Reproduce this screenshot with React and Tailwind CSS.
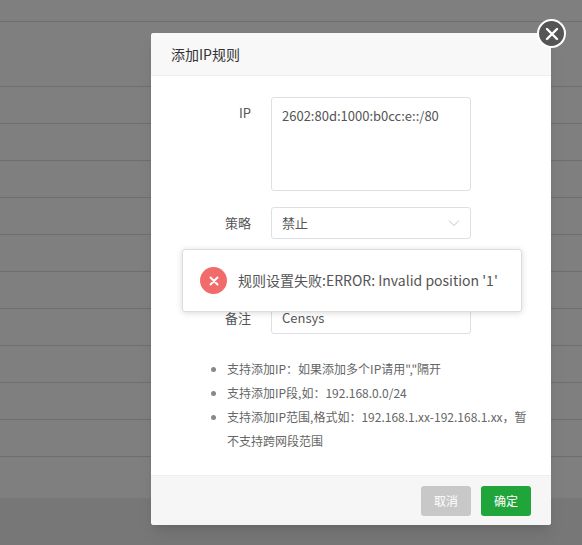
import React from 'react';

const font = { fontFamily: '"Noto Sans CJK SC", "Noto Sans", sans-serif' };

export default function App() {
  const rows = Array.from({ length: 11 });
  return (
    <div className="relative w-[582px] h-[545px] overflow-hidden bg-[#7f7f7f]" style={font}>
      {/* dimmed table behind */}
      <div className="pt-[21px]">
        <div className="h-[65px] border-t border-[#6e6e6e]" />
        {rows.map((_, i) => (
          <div key={i} className="h-[37px] border-t border-[#6e6e6e]" />
        ))}
      </div>
      <div className="absolute left-0 right-0 top-[498px] bottom-0 bg-[#777]" />

      {/* modal */}
      <div className="absolute left-[151px] top-[33px] w-[400px] h-[492px] bg-white rounded-[3px] flex flex-col shadow-lg">
        <div className="h-[43px] bg-[#f8f8f8] border-b border-[#eee] rounded-t-[3px] flex items-center px-[20px] text-[14px] text-[#333]">
          添加IP规则
        </div>
        <div className="flex-1 pt-[21px] text-[13px] text-[#555]">
          <div className="flex">
            <div className="w-[100px] text-right pt-[6px]">IP</div>
            <div className="ml-[20px] w-[200px] h-[94px] border border-[#dcdfe6] rounded-[3px] px-[10px] py-[8px] text-[#555]">
              2602:80d:1000:b0cc:e::/80
            </div>
          </div>
          <div className="flex mt-[16px] items-center">
            <div className="w-[100px] text-right">策略</div>
            <div className="ml-[20px] w-[200px] h-[32px] border border-[#dcdfe6] rounded-[3px] px-[10px] flex items-center justify-between">
              <span>禁止</span>
              <svg width="12" height="8" viewBox="0 0 12 8" fill="none" stroke="#c0c4cc" strokeWidth="1">
                <path d="M1 1.5l5 5 5-5" />
              </svg>
            </div>
          </div>
          <div className="h-[63px]" />
          <div className="flex items-center">
            <div className="w-[100px] text-right">备注</div>
            <div className="ml-[20px] w-[200px] h-[32px] border border-[#dcdfe6] rounded-[3px] px-[10px] flex items-center">
              Censys
            </div>
          </div>
          <ul className="mt-[23px] ml-[62px] mr-[18px] list-disc pl-[14px] text-[12px] text-[#666] leading-[24px] marker:text-[#888]">
            <li>支持添加IP：如果添加多个IP请用","隔开</li>
            <li>支持添加IP段,如：192.168.0.0/24</li>
            <li>支持添加IP范围,格式如：192.168.1.xx-192.168.1.xx，暂不支持跨网段范围</li>
          </ul>
        </div>
        <div className="h-[50px] bg-[#f5f6f5] border-t border-[#eee] rounded-b-[3px] flex items-center justify-end gap-[10px] pr-[20px]">
          <button className="w-[50px] h-[30px] rounded-[3px] bg-[#c8c8c8] text-white text-[12px]">取消</button>
          <button className="w-[50px] h-[30px] rounded-[3px] bg-[#20a53a] text-white text-[12px]">确定</button>
        </div>
      </div>

      {/* close */}
      <div className="absolute left-[537px] top-[19px] w-[29px] h-[29px] rounded-full bg-[#555] border-2 border-white flex items-center justify-center">
        <svg width="14" height="14" viewBox="0 0 14 14" stroke="white" strokeWidth="2.4" strokeLinecap="round">
          <path d="M2 2l10 10M12 2L2 12" />
        </svg>
      </div>

      {/* toast */}
      <div className="absolute left-[182px] top-[249px] w-[340px] h-[63px] bg-white border border-[#ddd] rounded-[3px] shadow-[0_1px_6px_rgba(0,0,0,0.15)] flex items-center pl-[17px]">
        <div className="w-[27px] h-[27px] rounded-full bg-[#f26b6b] flex items-center justify-center">
          <svg width="10" height="10" viewBox="0 0 10 10" stroke="white" strokeWidth="2" strokeLinecap="round">
            <path d="M1.5 1.5l7 7M8.5 1.5l-7 7" />
          </svg>
        </div>
        <span className="ml-[11px] text-[14px] text-[#555]">规则设置失败:ERROR: Invalid position '1'</span>
      </div>
    </div>
  );
}
